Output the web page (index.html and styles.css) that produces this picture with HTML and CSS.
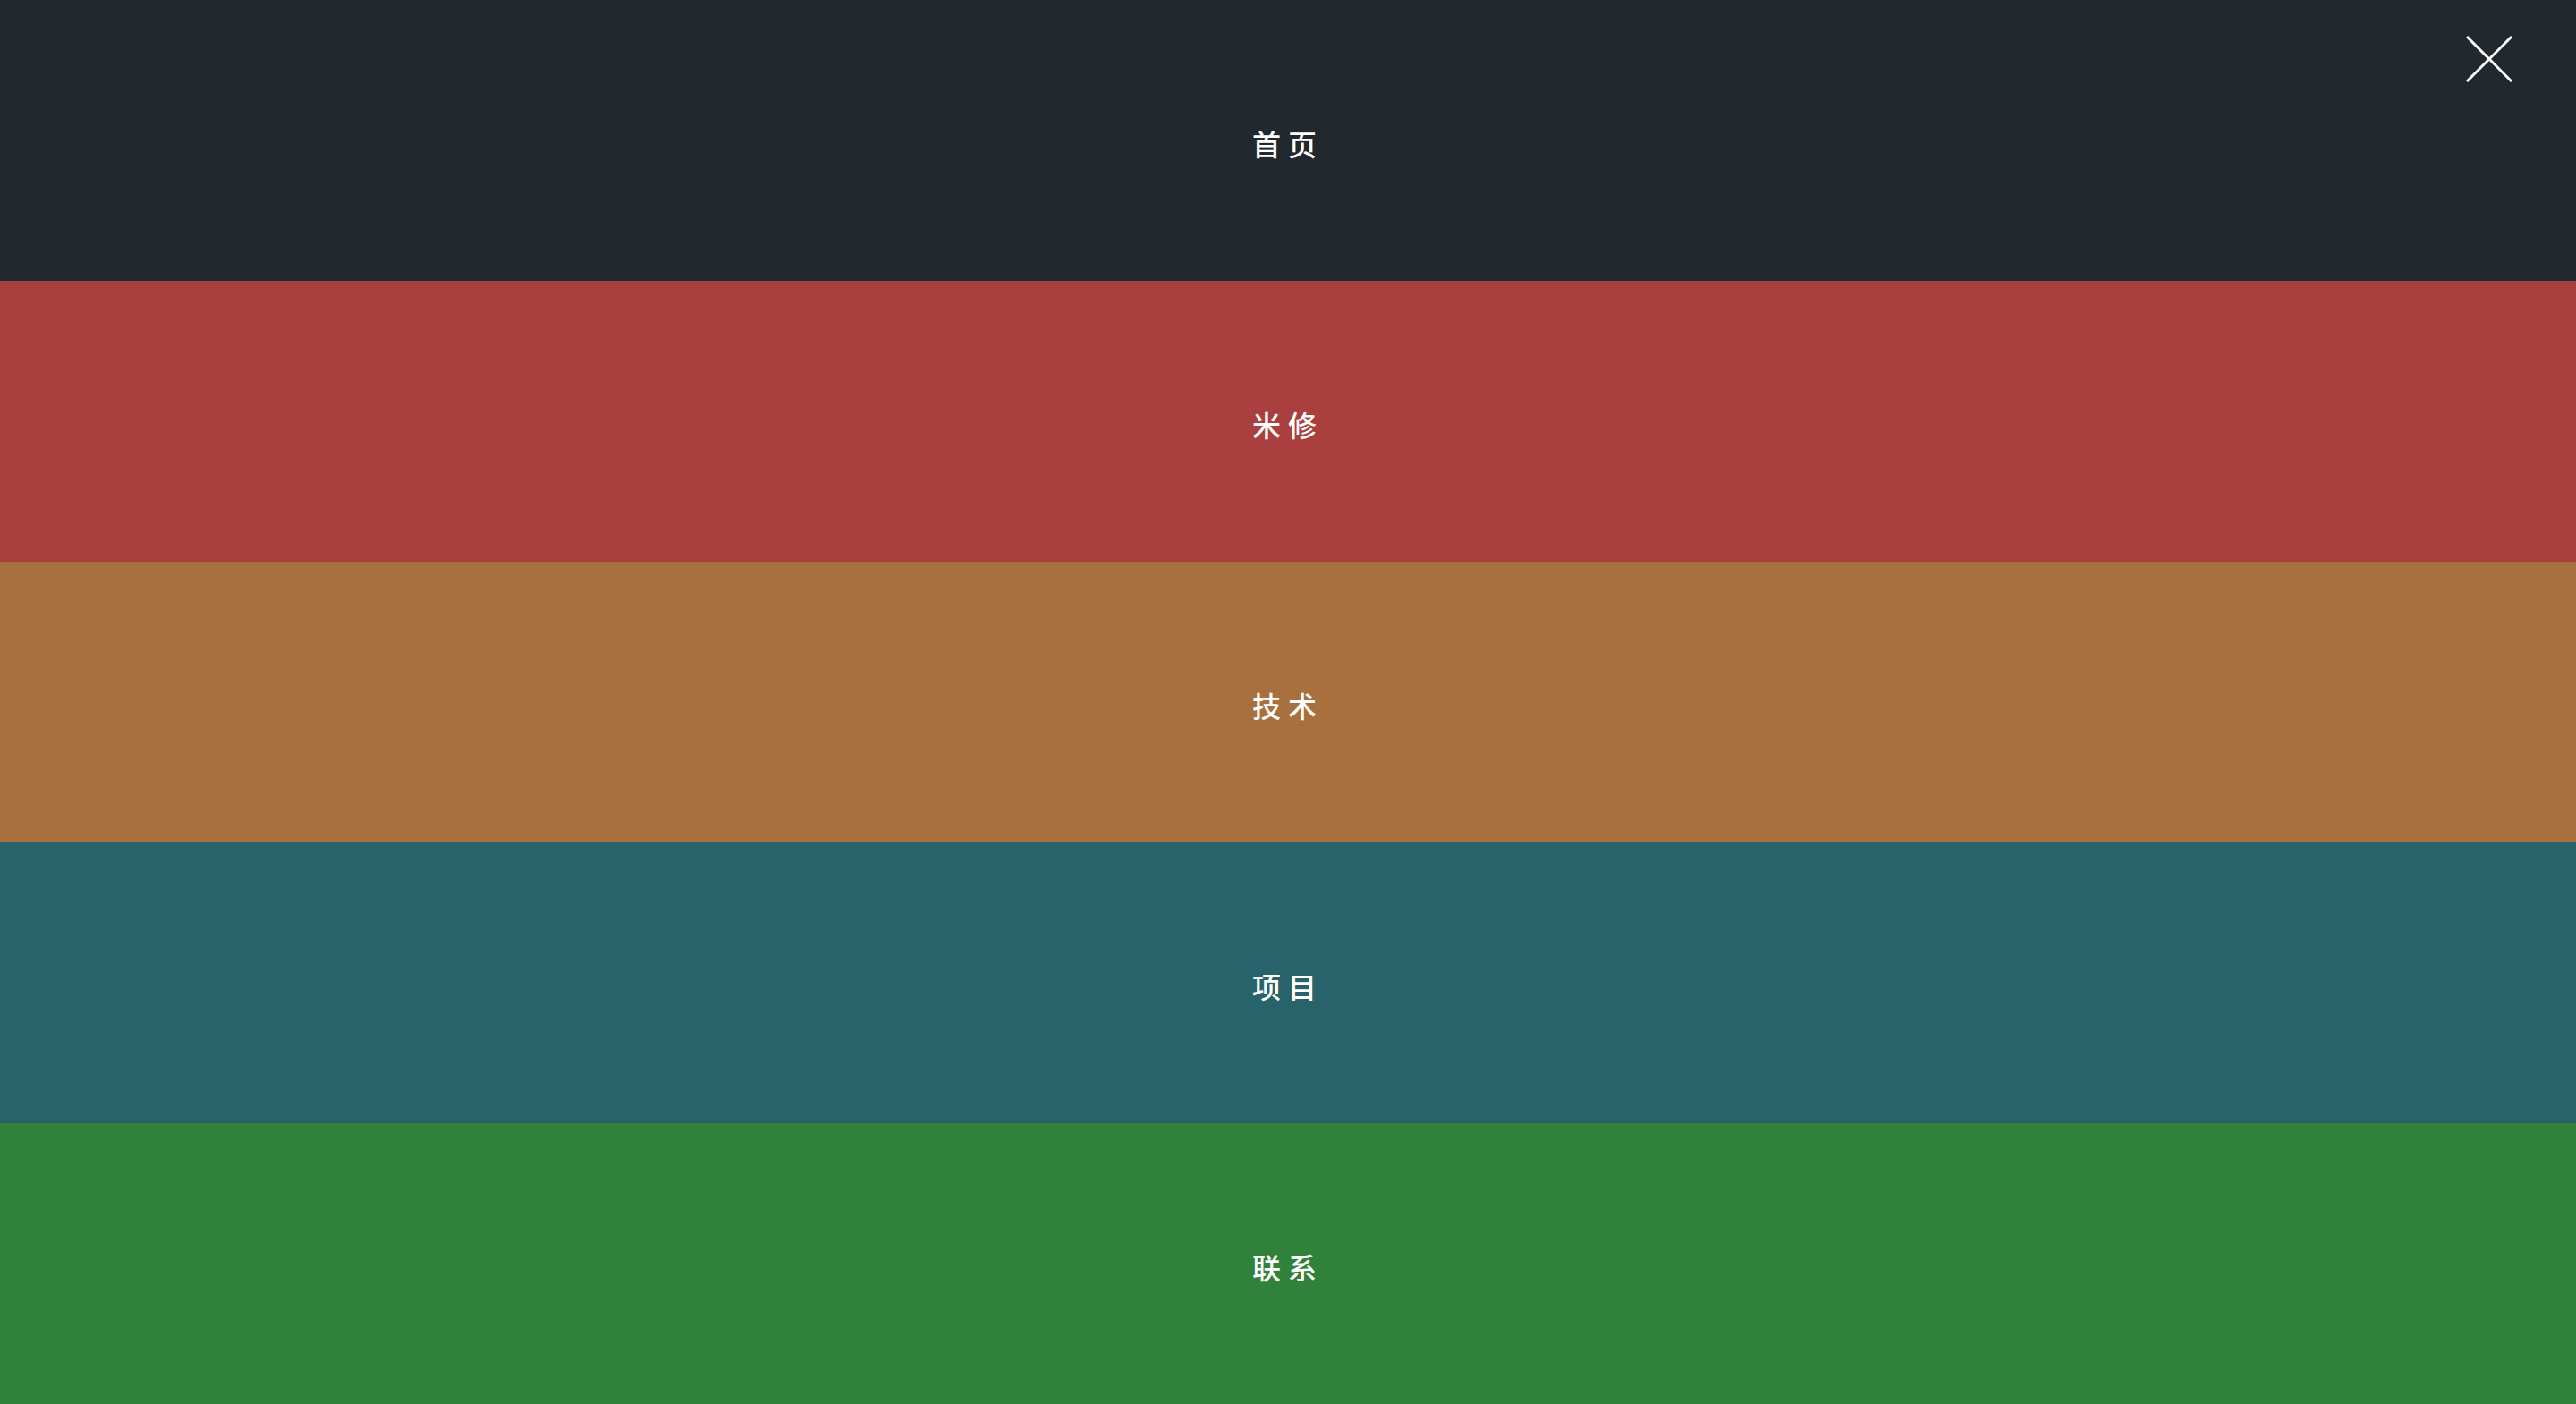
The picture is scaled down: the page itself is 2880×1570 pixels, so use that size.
FILE: index.html
```html
<!DOCTYPE html>
<html lang="zh-CN">
<head>
<meta charset="utf-8">
<title>菜单</title>
<link rel="stylesheet" href="styles.css">
</head>
<body>
<nav class="menu">
  <a class="item item-home" href="#">首页</a>
  <a class="item item-mixiu" href="#">米修</a>
  <a class="item item-tech" href="#">技术</a>
  <a class="item item-project" href="#">项目</a>
  <a class="item item-contact" href="#">联系</a>
</nav>
<button class="close" aria-label="关闭">
  <svg viewBox="0 0 52 52" width="52" height="52">
    <path d="M1 1 L51 51 M51 1 L1 51" stroke="#fff" stroke-width="3" fill="none"/>
  </svg>
</button>
</body>
</html>
```
FILE: styles.css
```css
html, body {
  margin: 0;
  padding: 0;
  height: 100%;
}
body {
  font-family: "Noto Sans CJK SC", "Noto Sans", sans-serif;
  overflow: hidden;
}
.menu {
  display: flex;
  flex-direction: column;
  height: 100vh;
}
.item {
  flex: 1;
  display: flex;
  align-items: center;
  justify-content: center;
  color: #fff;
  text-decoration: none;
  font-size: 32px;
  font-weight: 500;
  letter-spacing: 8px;
  padding-top: 6px;
  box-sizing: border-box;
}
.item-home { background: #21292e; }
.item-mixiu { background: #a93f3e; }
.item-tech { background: #a86f3f; }
.item-project { background: #28636b; }
.item-contact { background: #30823b; }
.close {
  position: absolute;
  top: 40px;
  left: 2757px;
  width: 52px;
  height: 52px;
  padding: 0;
  border: 0;
  background: transparent;
  cursor: pointer;
}
.close svg { display: block; }
```
